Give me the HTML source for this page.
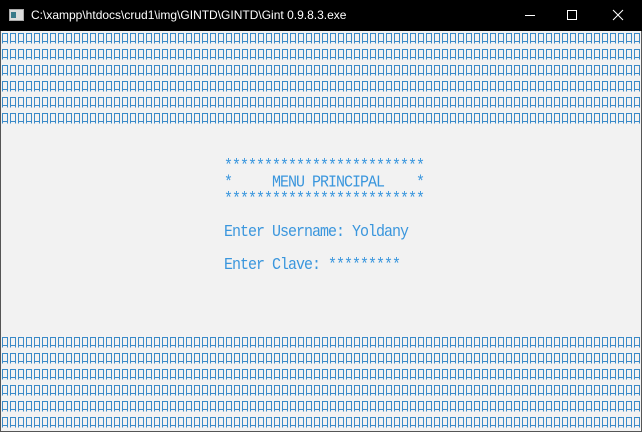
<!DOCTYPE html>
<html><head><style>
html,body{margin:0;padding:0;width:642px;height:432px;overflow:hidden;background:#f2f2f2}
#tb{position:absolute;left:0;top:0;width:642px;height:31px;background:#000}
#tt{position:absolute;left:31px;top:8px;color:#fff;font:12px "Liberation Sans",sans-serif}
pre{position:absolute;margin:0;left:224px;top:158px;font:15px/15px "Liberation Mono",monospace;letter-spacing:-1px;color:#3a96dd;transform:scaleY(1.1);transform-origin:0 0}
</style></head><body>
<div id="tb">
<svg width="642" height="31" style="position:absolute;left:0;top:0">
<rect x="9.5" y="9.5" width="14" height="11" fill="#ddd" stroke="#aaa"/>
<rect x="11" y="12" width="5" height="6" fill="#3a7a8a"/>
<line x1="525" y1="15.5" x2="535" y2="15.5" stroke="#fff"/>
<rect x="567.5" y="10.5" width="9" height="9" fill="none" stroke="#fff"/>
<path d="M613 10 L623 20 M623 10 L613 20" stroke="#fff"/>
</svg>
<div id="tt">C:\xampp\htdocs\crud1\img\GINTD\GINTD\Gint 0.9.8.3.exe</div>
</div>
<svg width="642" height="432" style="position:absolute;left:0;top:0">
<defs><pattern id="p" x="1" y="31" width="8" height="16" patternUnits="userSpaceOnUse">
<path d="M1.5 12.5 V2.5 H6.5 V12.5 M1.5 10.5 H6.5" fill="none" stroke="#3a8ac8" stroke-width="1"/>
</pattern></defs>
<rect x="1" y="31" width="640" height="96" fill="url(#p)"/>
<rect x="1" y="335" width="640" height="96" fill="url(#p)"/>
<rect x="0" y="31" width="1" height="401" fill="#555"/>
<rect x="641" y="31" width="1" height="401" fill="#555"/>
<rect x="0" y="431" width="642" height="1" fill="#555"/>
</svg>
<pre>*************************
*     MENU PRINCIPAL    *
*************************

Enter Username: Yoldany

Enter Clave: *********</pre>
</body></html>
